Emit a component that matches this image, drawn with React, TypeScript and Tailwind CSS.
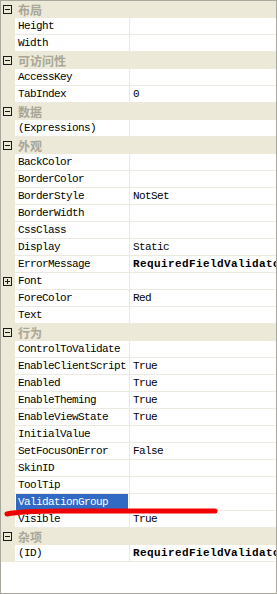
import React from "react";

type Row =
  | { kind: "cat"; label: string }
  | { kind: "prop"; name: string; value?: string; bold?: boolean; plus?: boolean; selected?: boolean };

const rows: Row[] = [
  { kind: "cat", label: "布局" },
  { kind: "prop", name: "Height" },
  { kind: "prop", name: "Width" },
  { kind: "cat", label: "可访问性" },
  { kind: "prop", name: "AccessKey" },
  { kind: "prop", name: "TabIndex", value: "0" },
  { kind: "cat", label: "数据" },
  { kind: "prop", name: "(Expressions)" },
  { kind: "cat", label: "外观" },
  { kind: "prop", name: "BackColor" },
  { kind: "prop", name: "BorderColor" },
  { kind: "prop", name: "BorderStyle", value: "NotSet" },
  { kind: "prop", name: "BorderWidth" },
  { kind: "prop", name: "CssClass" },
  { kind: "prop", name: "Display", value: "Static" },
  { kind: "prop", name: "ErrorMessage", value: "RequiredFieldValidator1", bold: true },
  { kind: "prop", name: "Font", plus: true },
  { kind: "prop", name: "ForeColor", value: "Red" },
  { kind: "prop", name: "Text" },
  { kind: "cat", label: "行为" },
  { kind: "prop", name: "ControlToValidate" },
  { kind: "prop", name: "EnableClientScript", value: "True" },
  { kind: "prop", name: "Enabled", value: "True" },
  { kind: "prop", name: "EnableTheming", value: "True" },
  { kind: "prop", name: "EnableViewState", value: "True" },
  { kind: "prop", name: "InitialValue" },
  { kind: "prop", name: "SetFocusOnError", value: "False" },
  { kind: "prop", name: "SkinID" },
  { kind: "prop", name: "ToolTip" },
  { kind: "prop", name: "ValidationGroup", selected: true },
  { kind: "prop", name: "Visible", value: "True" },
  { kind: "cat", label: "杂项" },
  { kind: "prop", name: "(ID)", value: "RequiredFieldValidator1", bold: true },
];

function Box({ plus }: { plus?: boolean }) {
  return (
    <div className="relative w-[9px] h-[9px] border border-[#1a1a1a]">
      <div className="absolute left-[1px] top-[3px] w-[5px] h-[1px] bg-[#1a1a1a]" />
      {plus && <div className="absolute left-[3px] top-[1px] w-[1px] h-[5px] bg-[#1a1a1a]" />}
    </div>
  );
}

const mono = "font-['Liberation_Mono','DejaVu_Sans_Mono',monospace] text-[11px] tracking-[-0.6px] leading-[16px] text-black";

export default function App() {
  return (
    <div className="relative w-[277px] h-[594px] border border-[#a9a89e] bg-white overflow-hidden">
      <div className="flex flex-col">
        {rows.map((r, i) =>
          r.kind === "cat" ? (
            <div key={i} className="flex h-[17px] bg-[#ece9d8]">
              <div className="w-[14px] flex items-center pl-[2px] pt-[0px]">
                <Box />
              </div>
              <div className="pl-[3px] font-['Noto_Sans_CJK_SC',sans-serif] font-bold text-[12px] leading-[17px] text-[#a9a696]">
                {r.label}
              </div>
            </div>
          ) : (
            <div key={i} className="flex h-[17px]">
              <div className="w-[14px] bg-[#ece9d8] flex items-center pl-[2px]">
                {r.plus && <Box plus />}
              </div>
              <div className="w-[115px] border-r border-b border-[#ebe9e0] h-[17px] pl-[1px]">
                <div
                  className={`${mono} h-[16px] pl-[2px] whitespace-nowrap overflow-hidden ${
                    r.selected ? "bg-[#316ac5] text-white w-[112px]" : ""
                  }`}
                >
                  {r.name}
                </div>
              </div>
              <div
                className={`flex-1 border-b border-[#ebe9e0] h-[17px] pl-[3px] whitespace-nowrap overflow-hidden ${mono} ${
                  r.bold ? "font-bold tracking-[0.4px]" : ""
                }`}
              >
                {r.value ?? ""}
              </div>
            </div>
          )
        )}
      </div>
      <svg className="absolute left-0 top-0 pointer-events-none" width="277" height="594">
        <path
          d="M6 513 Q 20 510 60 510 Q 140 510 214 510"
          stroke="#f00000"
          strokeWidth="5"
          fill="none"
          strokeLinecap="round"
        />
      </svg>
    </div>
  );
}
